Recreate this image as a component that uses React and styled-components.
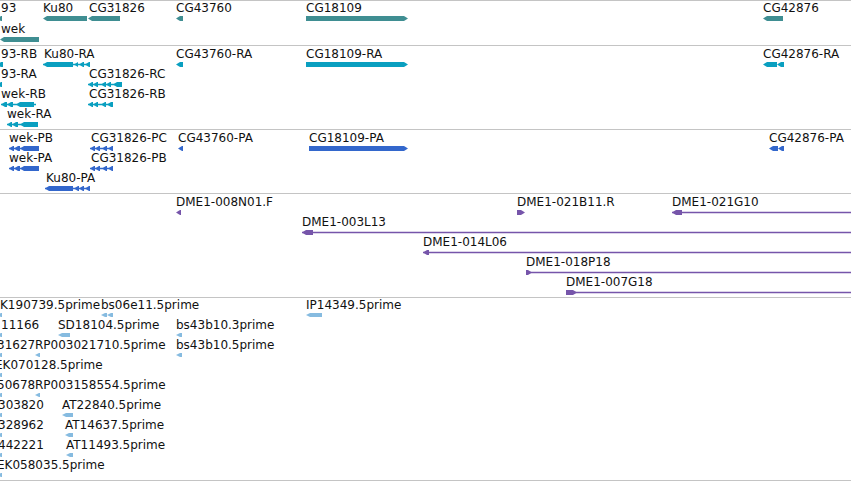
import styled, { createGlobalStyle } from 'styled-components';

const GlobalStyle = createGlobalStyle`
  html, body {
    margin: 0;
    padding: 0;
    background: #fff;
  }
  body {
    font-family: 'DejaVu Sans', 'Liberation Sans', sans-serif;
    color: #111;
  }
`;

// parts: [kind, x0, x1, dir] in page x; 'bar' is an exon block with an arrow tip, 'line' a thin intron/span
const tracks = [
  {
    id: 'genes',
    height: 44,
    pad: 1,
    rowH: 21,
    color: '#3f8e92',
    glyphH: 5,
    features: [
      { x: 1, row: 0, label: '93', parts: [['bar', -3, 2, 'l']] },
      { x: 43, row: 0, label: 'Ku80', parts: [['bar', 43, 87, 'l']] },
      { x: 89, row: 0, label: 'CG31826', parts: [['bar', 88, 120, 'l']] },
      { x: 176, row: 0, label: 'CG43760', parts: [['bar', 176, 183, 'l']] },
      { x: 306, row: 0, label: 'CG18109', parts: [['bar', 306, 408, 'r']] },
      { x: 763, row: 0, label: 'CG42876', parts: [['bar', 763, 783, 'l']] },
      { x: 1, row: 1, label: 'wek', parts: [['bar', 0, 39, 'l']] }
    ]
  },
  {
    id: 'transcripts',
    height: 83,
    pad: 2,
    rowH: 20,
    color: '#0a9fc0',
    glyphH: 5,
    features: [
      { x: 1, row: 0, label: '93-RB', parts: [['bar', -3, 3, 'l']] },
      {
        x: 44,
        row: 0,
        label: 'Ku80-RA',
        parts: [['line', 43, 90], ['bar', 43, 73, 'l'], ['bar', 74, 78, 'l'], ['bar', 79, 84, 'l'], ['bar', 85, 90, 'l']]
      },
      { x: 176, row: 0, label: 'CG43760-RA', parts: [['bar', 176, 183, 'l']] },
      { x: 306, row: 0, label: 'CG18109-RA', parts: [['bar', 306, 408, 'r']] },
      { x: 763, row: 0, label: 'CG42876-RA', parts: [['bar', 763, 777, 'l'], ['bar', 777, 784, 'l']] },
      { x: 1, row: 1, label: '93-RA', parts: [['bar', -3, 2, 'l']] },
      {
        x: 89,
        row: 1,
        label: 'CG31826-RC',
        parts: [['line', 88, 122], ['bar', 88, 93, 'l'], ['bar', 93, 98, 'l'], ['bar', 101, 106, 'l'], ['bar', 106, 111, 'l'], ['bar', 113, 122, 'l']]
      },
      {
        x: 1,
        row: 2,
        label: 'wek-RB',
        parts: [['line', 1, 36], ['bar', 1, 7, 'l'], ['bar', 7, 13, 'l'], ['bar', 16, 34, 'l']]
      },
      {
        x: 89,
        row: 2,
        label: 'CG31826-RB',
        parts: [['line', 88, 113], ['bar', 88, 93, 'l'], ['bar', 93, 98, 'l'], ['bar', 101, 106, 'l'], ['bar', 107, 113, 'l']]
      },
      {
        x: 7,
        row: 3,
        label: 'wek-RA',
        parts: [['line', 7, 38], ['bar', 7, 12, 'l'], ['bar', 12, 18, 'l'], ['bar', 20, 38, 'l']]
      }
    ]
  },
  {
    id: 'proteins',
    height: 63,
    pad: 2,
    rowH: 20,
    color: '#3367cc',
    glyphH: 5,
    features: [
      { x: 9, row: 0, label: 'wek-PB', parts: [['line', 9, 39], ['bar', 9, 14, 'l'], ['bar', 14, 20, 'l'], ['bar', 20, 39, 'l']] },
      {
        x: 91,
        row: 0,
        label: 'CG31826-PC',
        parts: [['line', 90, 113], ['bar', 90, 95, 'l'], ['bar', 95, 100, 'l'], ['bar', 102, 107, 'l'], ['bar', 108, 113, 'l']]
      },
      { x: 178, row: 0, label: 'CG43760-PA', parts: [['bar', 178, 183, 'l']] },
      { x: 309, row: 0, label: 'CG18109-PA', parts: [['bar', 309, 408, 'r']] },
      { x: 769, row: 0, label: 'CG42876-PA', parts: [['bar', 769, 778, 'l'], ['bar', 778, 784, 'l']] },
      { x: 9, row: 1, label: 'wek-PA', parts: [['line', 9, 39], ['bar', 9, 14, 'l'], ['bar', 14, 20, 'l'], ['bar', 20, 39, 'l']] },
      {
        x: 91,
        row: 1,
        label: 'CG31826-PB',
        parts: [['line', 90, 113], ['bar', 90, 95, 'l'], ['bar', 95, 100, 'l'], ['bar', 102, 107, 'l'], ['bar', 108, 113, 'l']]
      },
      {
        x: 46,
        row: 2,
        label: 'Ku80-PA',
        parts: [['line', 45, 90], ['bar', 45, 73, 'l'], ['bar', 74, 79, 'l'], ['bar', 79, 84, 'l'], ['bar', 85, 90, 'l']]
      }
    ]
  },
  {
    id: 'clones',
    height: 103,
    pad: 1.5,
    rowH: 20,
    color: '#7655aa',
    glyphH: 5,
    features: [
      { x: 176, row: 0, label: 'DME1-008N01.F', parts: [['bar', 176, 181, 'l']] },
      { x: 517, row: 0, label: 'DME1-021B11.R', parts: [['bar', 517, 525, 'r']] },
      { x: 672, row: 0, label: 'DME1-021G10', parts: [['line', 672, 851], ['bar', 672, 682, 'l']] },
      { x: 302, row: 1, label: 'DME1-003L13', parts: [['line', 302, 851], ['bar', 302, 313, 'l']] },
      { x: 423, row: 2, label: 'DME1-014L06', parts: [['line', 423, 851], ['bar', 423, 429, 'l']] },
      { x: 526, row: 3, label: 'DME1-018P18', parts: [['line', 526, 851], ['bar', 526, 532, 'r']] },
      { x: 566, row: 4, label: 'DME1-007G18', parts: [['line', 566, 851], ['bar', 566, 577, 'r']] }
    ]
  },
  {
    id: 'ests',
    height: 182,
    pad: 1,
    rowH: 20,
    color: '#86bbe0',
    glyphH: 4,
    features: [
      { x: 0, row: 0, label: 'K190739.5prime', parts: [['bar', -3, 2, 'l']] },
      { x: 101, row: 0, label: 'bs06e11.5prime', parts: [['bar', 101, 107, 'l'], ['bar', 107, 113, 'l']] },
      { x: 306, row: 0, label: 'IP14349.5prime', parts: [['bar', 306, 322, 'l']] },
      { x: 1, row: 1, label: '11166', parts: [['bar', -3, 2, 'l']] },
      { x: 58, row: 1, label: 'SD18104.5prime', parts: [['bar', 58, 70, 'l']] },
      { x: 176, row: 1, label: 'bs43b10.3prime', parts: [['bar', 176, 182, 'l']] },
      { x: -3, row: 2, label: '31627', parts: [['bar', -3, 2, 'l']] },
      { x: 35, row: 2, label: 'RP003021710.5prime', parts: [['bar', 35, 40, 'l']] },
      { x: 176, row: 2, label: 'bs43b10.5prime', parts: [['bar', 176, 182, 'l']] },
      { x: -5, row: 3, label: 'EK070128.5prime', parts: [['bar', -3, 2, 'l']] },
      { x: -3, row: 4, label: '50678', parts: [['bar', -3, 2, 'l']] },
      { x: 35, row: 4, label: 'RP003158554.5prime', parts: [['bar', 35, 40, 'l']] },
      { x: -2, row: 5, label: '303820', parts: [['bar', -3, 2, 'l']] },
      { x: 62, row: 5, label: 'AT22840.5prime', parts: [['bar', 62, 73, 'l']] },
      { x: -2, row: 6, label: '328962', parts: [['bar', -3, 2, 'l']] },
      { x: 65, row: 6, label: 'AT14637.5prime', parts: [['bar', 65, 73, 'l']] },
      { x: -2, row: 7, label: '442221', parts: [['bar', -3, 2, 'l']] },
      { x: 66, row: 7, label: 'AT11493.5prime', parts: [['bar', 66, 73, 'l']] },
      { x: -3, row: 8, label: 'EK058035.5prime', parts: [['bar', -3, 2, 'l']] }
    ]
  }
];

const Glyph = ({ parts, x, h, color }) => {
  const xs = parts.flatMap((p) => [p[1], p[2]]);
  const minX = Math.min(...xs);
  const maxX = Math.max(...xs);
  const H = h + 2;
  const cy = H / 2;
  const top = cy - h / 2;
  const bot = cy + h / 2;
  return (
    <GlyphSvg
      width={maxX - minX}
      height={H}
      viewBox={`${minX} 0 ${maxX - minX} ${H}`}
      $offset={minX - x}
    >
      {parts.map(([kind, a, b, dir], i) => {
        if (kind === 'line') {
          return <rect key={i} x={a} y={cy - 0.75} width={b - a} height={1.5} fill={color} />;
        }
        const t = Math.min(4, b - a);
        const pts =
          dir === 'r'
            ? `${a},${top} ${b - t},${top} ${b},${cy} ${b - t},${bot} ${a},${bot}`
            : `${a},${cy} ${a + t},${top} ${b},${top} ${b},${bot} ${a + t},${bot}`;
        return <polygon key={i} points={pts} fill={color} />;
      })}
    </GlyphSvg>
  );
};

const App = () => {
  return (
    <>
      <GlobalStyle />
      <View>
        {tracks.map((track) => (
          <Track key={track.id} $h={track.height}>
            {track.features.map((f) => (
              <Feature key={f.label} $x={f.x} $y={track.pad + f.row * track.rowH}>
                <Label>{f.label}</Label>
                <Glyph parts={f.parts} x={f.x} h={track.glyphH} color={track.color} />
              </Feature>
            ))}
          </Track>
        ))}
      </View>
    </>
  );
};

export default App;

const View = styled.div`
  width: 851px;
  display: flex;
  flex-direction: column;
  border-bottom: 1px solid #c4c4c4;
  background: #fff;
`;

const Track = styled.div`
  position: relative;
  height: ${({ $h }) => $h}px;
  border-top: 1px solid #c4c4c4;
  overflow: hidden;
`;

const Feature = styled.div.attrs(({ $x, $y }) => ({
  style: { left: `${$x}px`, top: `${$y}px` }
}))`
  position: absolute;
  display: flex;
  flex-direction: column;
  align-items: flex-start;
`;

const Label = styled.span`
  font-size: 12px;
  line-height: 13px;
  white-space: nowrap;
  color: #111;
`;

const GlyphSvg = styled.svg`
  display: block;
  overflow: visible;
  margin-left: ${({ $offset }) => $offset}px;
`;
